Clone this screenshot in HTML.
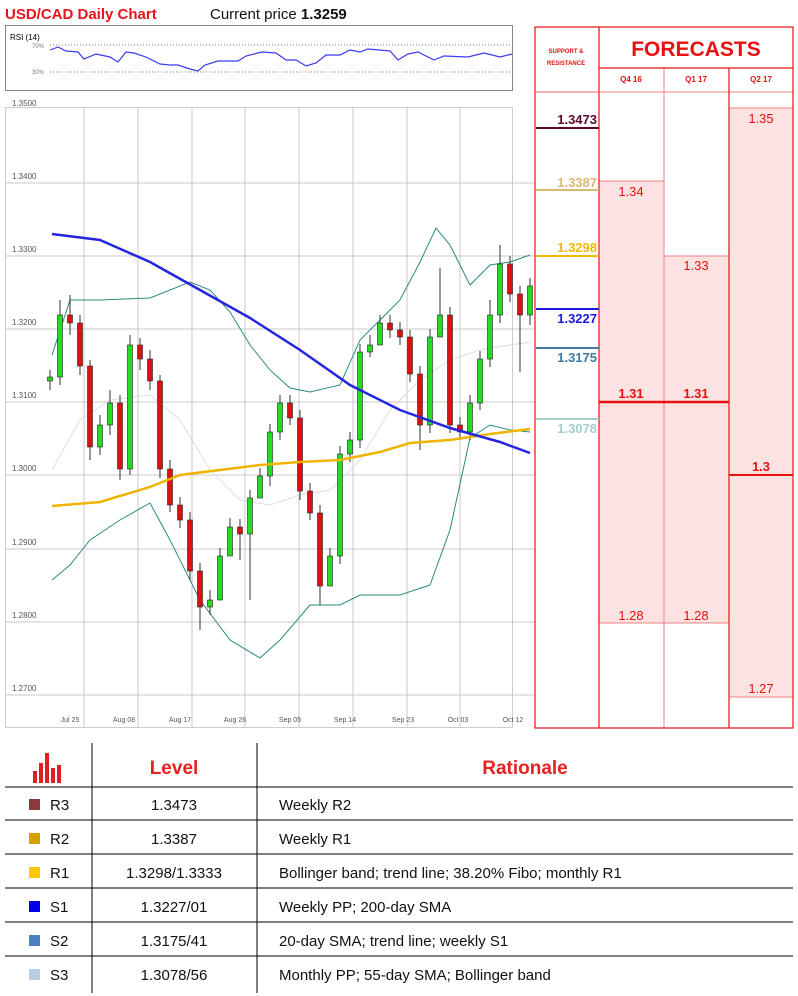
<!DOCTYPE html>
<html><head><meta charset="utf-8"><style>
body{margin:0;background:#fff;width:798px;height:996px;overflow:hidden;font-family:"Liberation Sans",sans-serif}
svg{position:absolute;left:0;top:0}
</style></head><body>
<svg width="798" height="996" viewBox="0 0 798 996" font-family="Liberation Sans, sans-serif">
<!-- titles -->
<text x="5" y="19" font-size="15" font-weight="bold" fill="#e8141c">USD/CAD Daily Chart</text>
<text x="210" y="19" font-size="15" fill="#111">Current price <tspan font-weight="bold">1.3259</tspan></text>
<!-- RSI panel -->
<rect x="5.5" y="25.5" width="507" height="65" fill="#fff" stroke="#888"/>
<text x="10" y="40" font-size="8" fill="#000">RSI (14)</text>
<text x="32" y="48" font-size="6" fill="#777">70%</text>
<text x="32" y="74" font-size="6" fill="#777">30%</text>
<line x1="50" y1="45" x2="512" y2="45" stroke="#777" stroke-dasharray="1,2"/>
<line x1="50" y1="72" x2="512" y2="72" stroke="#777" stroke-dasharray="1,2"/>
<polyline fill="none" stroke="#3a3af0" stroke-width="1.2" points="50,50 58,47 66,51 78,52 84,59 96,54 110,57 118,62 126,52 134,53 146,57 160,64 170,65 178,65 190,69 198,71 205,65 218,61 238,61 246,56 262,52 276,53 286,60 296,60 306,66 316,63 326,55 340,55 350,50 360,52 368,49 390,51 398,60 408,54 418,52 434,60 444,56 468,57 484,53 500,57 512,54"/>
<!-- main chart -->
<text x="12" y="106" font-size="8" fill="#555">1.3500</text>
<rect x="5.5" y="107.5" width="507" height="620" fill="#fff" stroke="#ccc"/>
<g stroke="#c8c8c8" stroke-width="1">
<line x1="84" y1="108" x2="84" y2="728"/><line x1="138" y1="108" x2="138" y2="728"/><line x1="192" y1="108" x2="192" y2="728"/><line x1="245" y1="108" x2="245" y2="728"/><line x1="299" y1="108" x2="299" y2="728"/><line x1="353" y1="108" x2="353" y2="728"/><line x1="407" y1="108" x2="407" y2="728"/><line x1="460" y1="108" x2="460" y2="728"/>
<line x1="5" y1="183" x2="535" y2="183"/><line x1="5" y1="256" x2="535" y2="256"/><line x1="5" y1="329" x2="535" y2="329"/><line x1="5" y1="402" x2="535" y2="402"/><line x1="5" y1="475" x2="535" y2="475"/><line x1="5" y1="549" x2="535" y2="549"/><line x1="5" y1="622" x2="535" y2="622"/><line x1="5" y1="695" x2="535" y2="695"/>
</g>
<g font-size="8" fill="#555">
<text x="12" y="179">1.3400</text><text x="12" y="252">1.3300</text><text x="12" y="325">1.3200</text><text x="12" y="398">1.3100</text><text x="12" y="471">1.3000</text><text x="12" y="545">1.2900</text><text x="12" y="618">1.2800</text><text x="12" y="691">1.2700</text>
</g>
<g font-size="7" fill="#555" text-anchor="middle">
<text x="70" y="722">Jul 25</text><text x="124" y="722">Aug 08</text><text x="180" y="722">Aug 17</text><text x="235" y="722">Aug 26</text><text x="290" y="722">Sep 05</text><text x="345" y="722">Sep 14</text><text x="403" y="722">Sep 23</text><text x="458" y="722">Oct 03</text><text x="513" y="722">Oct 12</text>
</g>
<!-- bollinger -->
<polyline fill="none" stroke="#2a8a80" stroke-width="1" points="52,355 70,300 100,300 150,298 190,282 210,290 230,312 250,345 270,370 290,388 310,392 340,385 360,340 380,320 400,300 420,262 436,228 450,245 470,285 490,265 510,262 530,255"/>
<polyline fill="none" stroke="#2a8a80" stroke-width="1" points="52,580 70,565 90,540 120,520 150,503 170,540 200,600 230,640 260,658 280,640 310,605 340,605 360,595 400,595 430,585 450,530 470,438 490,425 510,430 530,432"/>
<polyline fill="none" stroke="#ddd" stroke-width="1" points="52,470 80,420 110,400 150,395 180,420 210,470 240,500 270,505 300,495 330,490 360,460 390,410 420,380 450,360 480,350 510,345 530,342"/>
<!-- candles wicks -->
<path stroke="#333" stroke-width="1" fill="none" d="M50 370V390M60 300V385M70 295V335M80 315V375M90 360V460M100 415V455M110 390V435M120 395V480M130 335V475M140 338V370M150 350V390M160 375V478M170 460V512M180 497V528M190 512V580M200 563V630M210 590V615M220 548V566M230 518V540M240 519V560M250 490V600M260 468V486M270 424V486M280 395V440M290 395V425M300 410V500M310 483V520M320 505V605M330 548V566M340 446V564M350 432V462M360 344V448M370 335V357M380 315V333M390 315V338M400 322V345M410 330V382M420 366V450M430 329V433M440 268V330M450 307V433M460 417V440M470 395V440M480 351V410M490 300V367M500 245V323M510 256V302M520 286V372M530 278V325"/>
<g stroke="#222" stroke-width="0.6">
<g fill="#22dd22">
<rect x="47.5" y="377" width="5" height="4"/><rect x="57.5" y="315" width="5" height="62"/><rect x="97.5" y="425" width="5" height="22"/><rect x="107.5" y="403" width="5" height="22"/><rect x="127.5" y="345" width="5" height="124"/><rect x="207.5" y="600" width="5" height="7"/><rect x="217.5" y="556" width="5" height="44"/><rect x="227.5" y="527" width="5" height="29"/><rect x="247.5" y="498" width="5" height="36"/><rect x="257.5" y="476" width="5" height="22"/><rect x="267.5" y="432" width="5" height="44"/><rect x="277.5" y="403" width="5" height="29"/><rect x="327.5" y="556" width="5" height="30"/><rect x="337.5" y="454" width="5" height="102"/><rect x="347.5" y="440" width="5" height="14"/><rect x="357.5" y="352" width="5" height="88"/><rect x="367.5" y="345" width="5" height="7"/><rect x="377.5" y="323" width="5" height="22"/><rect x="427.5" y="337" width="5" height="88"/><rect x="437.5" y="315" width="5" height="22"/><rect x="467.5" y="403" width="5" height="29"/><rect x="477.5" y="359" width="5" height="44"/><rect x="487.5" y="315" width="5" height="44"/><rect x="497.5" y="264" width="5" height="51"/><rect x="527.5" y="286" width="5" height="29"/>
</g>
<g fill="#e01010">
<rect x="67.5" y="315" width="5" height="8"/><rect x="77.5" y="323" width="5" height="43"/><rect x="87.5" y="366" width="5" height="81"/><rect x="117.5" y="403" width="5" height="66"/><rect x="137.5" y="345" width="5" height="14"/><rect x="147.5" y="359" width="5" height="22"/><rect x="157.5" y="381" width="5" height="88"/><rect x="167.5" y="469" width="5" height="36"/><rect x="177.5" y="505" width="5" height="15"/><rect x="187.5" y="520" width="5" height="51"/><rect x="197.5" y="571" width="5" height="36"/><rect x="237.5" y="527" width="5" height="7"/><rect x="287.5" y="403" width="5" height="15"/><rect x="297.5" y="418" width="5" height="73"/><rect x="307.5" y="491" width="5" height="22"/><rect x="317.5" y="513" width="5" height="73"/><rect x="387.5" y="323" width="5" height="7"/><rect x="397.5" y="330" width="5" height="7"/><rect x="407.5" y="337" width="5" height="37"/><rect x="417.5" y="374" width="5" height="51"/><rect x="447.5" y="315" width="5" height="110"/><rect x="457.5" y="425" width="5" height="7"/><rect x="507.5" y="264" width="5" height="30"/><rect x="517.5" y="294" width="5" height="21"/>
</g></g>
<!-- SMAs -->
<polyline fill="none" stroke="#f0b400" stroke-width="2.5" points="52,506 100,502 150,487 180,475 220,470 260,465 300,462 340,460 380,452 410,443 450,440 490,434 530,429"/>
<polyline fill="none" stroke="#2525e0" stroke-width="2.5" points="52,234 100,240 150,262 200,290 250,318 300,350 350,385 400,410 450,428 500,442 530,453"/>
<!-- right panel -->
<rect x="599" y="181" width="65" height="442" fill="#fde2e2"/>
<rect x="664" y="256" width="65" height="367" fill="#fde2e2"/>
<rect x="729" y="108" width="64" height="589" fill="#fde2e2"/>
<g stroke="#f08080" stroke-width="1">
<line x1="599" y1="181" x2="664" y2="181"/><line x1="599" y1="623" x2="729" y2="623"/><line x1="664" y1="256" x2="729" y2="256"/><line x1="729" y1="108" x2="793" y2="108"/><line x1="729" y1="697" x2="793" y2="697"/><line x1="664" y1="68" x2="664" y2="728"/><line x1="599" y1="92" x2="793" y2="92"/>
</g>
<line x1="599" y1="402" x2="729" y2="402" stroke="#e81010" stroke-width="2.5"/>
<line x1="729" y1="475" x2="793" y2="475" stroke="#e81010" stroke-width="2"/>
<g fill="none" stroke="#e81010" stroke-width="1.2">
<rect x="535" y="27" width="258" height="701"/>
<line x1="599" y1="27" x2="599" y2="728"/><line x1="729" y1="68" x2="729" y2="728"/><line x1="599" y1="68" x2="793" y2="68"/><line x1="535" y1="92" x2="599" y2="92" stroke="#f08080"/>
</g>
<text x="696" y="56" font-size="21" font-weight="bold" fill="#e81010" text-anchor="middle">FORECASTS</text>
<text x="566" y="53" font-size="6" font-weight="bold" fill="#e81010" text-anchor="middle">SUPPORT &amp;</text>
<text x="566" y="65" font-size="6" font-weight="bold" fill="#e81010" text-anchor="middle">RESISTANCE</text>
<g font-size="8" font-weight="bold" fill="#e81010" text-anchor="middle"><text x="631" y="82">Q4 16</text><text x="696" y="82">Q1 17</text><text x="761" y="82">Q2 17</text></g>
<g font-size="13" fill="#e81010" text-anchor="middle">
<text x="631" y="196">1.34</text><text x="696" y="270">1.33</text><text x="761" y="123">1.35</text>
<text x="631" y="398" font-weight="bold">1.31</text><text x="696" y="398" font-weight="bold">1.31</text><text x="761" y="471" font-weight="bold">1.3</text>
<text x="631" y="620">1.28</text><text x="696" y="620">1.28</text><text x="761" y="693">1.27</text>
</g>
<g font-size="13" font-weight="bold" text-anchor="end">
<text x="597" y="124" fill="#5a0a2a">1.3473</text><rect x="536" y="127" width="63" height="2" fill="#5a0a2a"/>
<text x="597" y="187" fill="#d9b870">1.3387</text><rect x="536" y="189" width="63" height="2" fill="#d9b870"/>
<text x="597" y="252" fill="#f0b800">1.3298</text><rect x="536" y="255" width="63" height="2" fill="#f0b800"/>
<rect x="536" y="308" width="63" height="2" fill="#1a1ae0"/><text x="597" y="323" fill="#1a1ae0">1.3227</text>
<rect x="536" y="347" width="63" height="2" fill="#3a7aa0"/><text x="597" y="362" fill="#3a7aa0">1.3175</text>
<rect x="536" y="418" width="63" height="2" fill="#a8cccc"/><text x="597" y="433" fill="#a8cccc">1.3078</text>
</g>
<!-- bottom table -->
<g stroke="#000" stroke-width="1">
<line x1="92" y1="743" x2="92" y2="993"/><line x1="257" y1="743" x2="257" y2="993"/>
<line x1="5" y1="787" x2="793" y2="787"/><line x1="5" y1="820" x2="793" y2="820"/><line x1="5" y1="854" x2="793" y2="854"/><line x1="5" y1="888" x2="793" y2="888"/><line x1="5" y1="922" x2="793" y2="922"/><line x1="5" y1="956" x2="793" y2="956"/>
</g>
<g fill="#e02020"><rect x="33" y="771" width="4" height="12"/><rect x="39" y="763" width="4" height="20"/><rect x="45" y="753" width="4" height="30"/><rect x="51" y="768" width="4" height="15"/><rect x="57" y="765" width="4" height="18"/></g>
<text x="174" y="774" font-size="19" font-weight="bold" fill="#e82020" text-anchor="middle">Level</text>
<text x="525" y="774" font-size="19" font-weight="bold" fill="#e82020" text-anchor="middle">Rationale</text>
<g font-size="15" fill="#111">
<rect x="29" y="799" width="11" height="11" fill="#8b3a3a"/><text x="50" y="810">R3</text><text x="174" y="810" text-anchor="middle">1.3473</text><text x="279" y="810">Weekly R2</text>
<rect x="29" y="833" width="11" height="11" fill="#d4a000"/><text x="50" y="844">R2</text><text x="174" y="844" text-anchor="middle">1.3387</text><text x="279" y="844">Weekly R1</text>
<rect x="29" y="867" width="11" height="11" fill="#ffc800"/><text x="50" y="878">R1</text><text x="174" y="878" text-anchor="middle">1.3298/1.3333</text><text x="279" y="878">Bollinger band; trend line; 38.20% Fibo; monthly R1</text>
<rect x="29" y="901" width="11" height="11" fill="#0000e8"/><text x="50" y="912">S1</text><text x="174" y="912" text-anchor="middle">1.3227/01</text><text x="279" y="912">Weekly PP; 200-day SMA</text>
<rect x="29" y="935" width="11" height="11" fill="#4a80c0"/><text x="50" y="946">S2</text><text x="174" y="946" text-anchor="middle">1.3175/41</text><text x="279" y="946">20-day SMA; trend line; weekly S1</text>
<rect x="29" y="969" width="11" height="11" fill="#b8cce4"/><text x="50" y="980">S3</text><text x="174" y="980" text-anchor="middle">1.3078/56</text><text x="279" y="980">Monthly PP; 55-day SMA; Bollinger band</text>
</g>
</svg>
</body></html>
